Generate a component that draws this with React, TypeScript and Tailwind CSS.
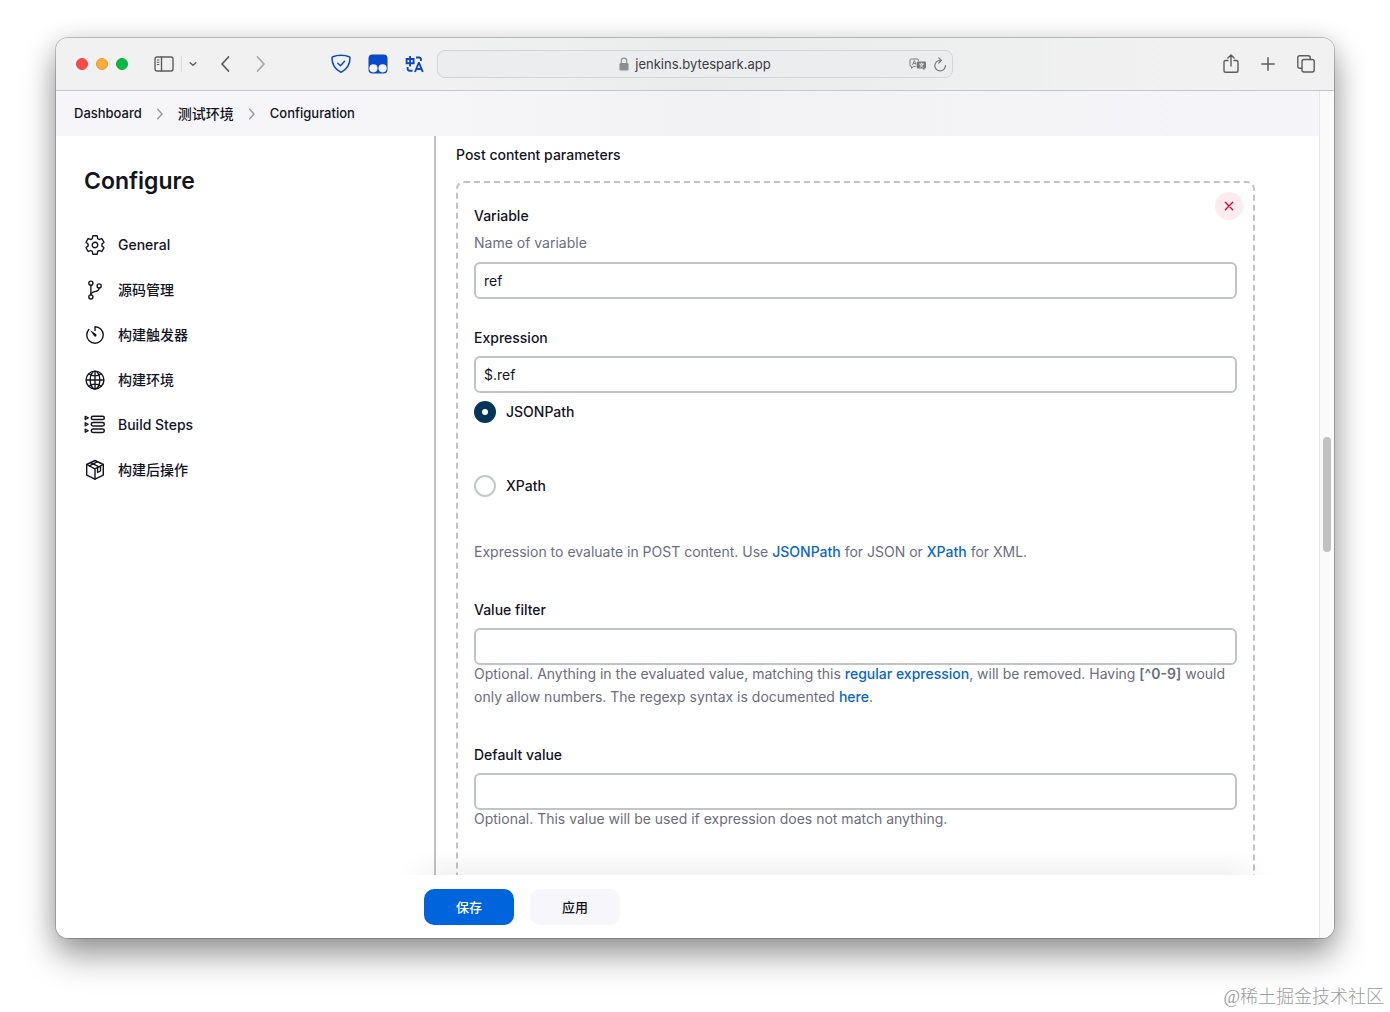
import type { ReactNode } from "react";
import {
  IoGitBranchOutline,
  IoGlobeOutline,
  IoSettingsOutline,
  IoTimerOutline,
} from "react-icons/io5";

const line = {
  fill: "none",
  stroke: "currentColor",
  strokeLinecap: "round" as const,
  strokeLinejoin: "round" as const,
};

function SidebarIcon() {
  return (
    <svg width="20" height="16" viewBox="0 0 20 16" {...line} strokeWidth="1.4">
      <rect x="1" y="1" width="18" height="14" rx="2" />
      <path d="M7.5 1v14" />
      <path d="M3.2 4h1.8M3.2 6.3h1.8M3.2 8.6h1.8" strokeWidth="1" />
    </svg>
  );
}

function Chevron({ size, dir, width = 1.6 }: { size: number; dir: "left" | "right" | "down"; width?: number }) {
  const paths = {
    left: "M11.5 2 5 9l6.500 7",
    right: "M5.500 2 12 9l-6.500 7",
    down: "M2.500 6 9 12l6.500-6",
  };
  return (
    <svg width={size} height={size} viewBox="0 0 18 18" {...line} strokeWidth={width}>
      <path d={paths[dir]} />
    </svg>
  );
}

function ShieldIcon() {
  return (
    <svg width="20" height="20" viewBox="0 0 20 20" {...line} strokeWidth="1.5">
      <path d="M10 1.200c3 0 6 .6 8.300 1.500.6.2.7.6.7 1.200 0 6.500-3.200 11.300-9 14.400C4.200 15.200 1 10.400 1 3.900c0-.6.1-1 .7-1.200C4 1.800 7 1.200 10 1.200Z" />
      <path d="m6.800 9.200 2.600 2.600 4.200-4.600" />
    </svg>
  );
}

function MonkeyIcon() {
  return (
    <svg width="20" height="20" viewBox="0 0 20 20">
      <rect x="0.500" y="0.500" width="19" height="19" rx="4" fill="#0a49c9" />
      <circle cx="5.400" cy="14.300" r="4.100" fill="#f1f2f2" />
      <circle cx="14.600" cy="14.300" r="4.100" fill="#f1f2f2" />
    </svg>
  );
}

function TranslateIcon() {
  return (
    <svg width="19" height="18" viewBox="0 0 19 18" {...line} strokeLinecap="butt" strokeLinejoin="miter" strokeWidth="1.900">
      <path d="M1.600 4h7v4.200h-7ZM5.100 1v10.500" />
      <path d="M11 2.500h3c1.300 0 1.900.6 1.900 1.900V6" />
      <path d="M2.600 12v1.600c0 1.400.8 2.200 2.200 2.200H7.500" />
      <path d="m10 17 3.700-9h.4l3.700 9M11.300 14h5.200" />
    </svg>
  );
}

function LockIcon() {
  return (
    <svg width="10" height="14" viewBox="0 0 10 14">
      <rect x="0.500" y="6" width="9" height="7.500" rx="1.200" fill="#8f8f91" />
      <path d="M2.300 6V3.800a2.700 2.700 0 0 1 5.400 0V6" fill="none" stroke="#8f8f91" strokeWidth="1.200" />
    </svg>
  );
}

function PageTranslateIcon() {
  return (
    <svg width="18" height="13" viewBox="0 0 18 13" fill="none">
      <path d="M9.500 3V2.200C9.500 1.400 9 1 8.300 1H2.200C1.400 1 1 1.400 1 2.200v5c0 .8.400 1.200 1.200 1.200h.4v2l2.200-2H6.800" stroke="#77787a" />
      <path d="m3.500 7 1.800-4.500L7 6.500M4.200 5.500h2.300" stroke="#77787a" strokeWidth="0.900" />
      <path d="M9.200 3.500h6.300c1 0 1.500.5 1.500 1.500v4.200c0 .9-.5 1.400-1.500 1.400v1.700l-2-1.700H9.200c-1 0-1.500-.5-1.500-1.400V5c0-1 .5-1.500 1.500-1.500Z" fill="#77787a" />
      <path d="M10 6h5M12.500 4.700V6M10.700 9.300c1.600-.6 2.700-1.700 3.200-3.300M11.200 6c.5 1.600 1.500 2.700 3.100 3.300" stroke="#ebeced" strokeWidth="0.900" />
    </svg>
  );
}

function ReloadIcon() {
  return (
    <svg width="14" height="15" viewBox="0 0 14 15" {...line} strokeWidth="1.200">
      <path d="M7.200 3.300a5.300 5.300 0 1 0 5.200 5.200" />
      <path d="M5.800.8 8.400 3.400 5.800 6" />
    </svg>
  );
}

function ShareIcon() {
  return (
    <svg width="16" height="20" viewBox="0 0 16 20" {...line} strokeWidth="1.400">
      <path d="M5 6.500H2.800C1.600 6.500 1 7.100 1 8.300v8.200c0 1.200.6 1.800 1.800 1.800h10.400c1.200 0 1.800-.6 1.800-1.800V8.300c0-1.200-.6-1.800-1.800-1.800H11" />
      <path d="M8 12V1.200M4.900 4.100 8 1l3.100 3.100" />
    </svg>
  );
}

function PlusIcon() {
  return (
    <svg width="14" height="14" viewBox="0 0 14 14" {...line} strokeWidth="1.500">
      <path d="M7 .8v12.400M.8 7h12.400" />
    </svg>
  );
}

function TabsIcon() {
  return (
    <svg width="18" height="18" viewBox="0 0 18 18" {...line} strokeWidth="1.400">
      <rect x="5" y="4.500" width="12.200" height="12.500" rx="2" />
      <path d="M5 13.200H2.800c-1.300 0-2-.7-2-2V2.800c0-1.300.7-2 2-2h8.400c1.300 0 2 .7 2 2v1.700" />
    </svg>
  );
}

function StepsIcon() {
  return (
    <svg width="22" height="22" viewBox="0 0 22 22" {...line} strokeWidth="1.500">
      {[3.9, 10.3, 16.7].map((y) => (
        <g key={y}>
          <rect x="7.300" y={y - 1.700} width="13" height="3.400" rx="1.700" />
          <path d={`M1.200 ${y - 1.6} 4.200 ${y} 1.200 ${y + 1.6}Z`} strokeWidth="1.300" />
        </g>
      ))}
    </svg>
  );
}

function PackageIcon() {
  return (
    <svg width="22" height="22" viewBox="0 0 22 22" {...line} strokeWidth="1.400">
      <path d="m11 1.500 8.300 4v10.600L11 20.200l-8.300-4.100V5.500Z" />
      <path d="m2.700 5.500 8.300 4.300 8.300-4.300M11 9.800v10.400" />
      <path d="m6.700 3.600 8.300 4.200M5.300 6.800l8.300-4.100M13.600 8.600v4.900l2.900-1.500V7.100" />
    </svg>
  );
}

function NavItem({ icon, children }: { icon: ReactNode; children: ReactNode }) {
  return (
    <li>
      <a href="#" className="flex h-[45px] items-center gap-3">
        <span className="flex w-[22px] shrink-0 justify-center">{icon}</span>
        {children}
      </a>
    </li>
  );
}

function TextField({ id, label, value = "", description }: { id: string; label: string; value?: string; description?: string }) {
  return (
    <div>
      <label htmlFor={id} className="block font-medium leading-[22px]">
        {label}
      </label>
      {description && <p className="mt-[5px] mb-2 leading-[22px] text-[#6d6d80]">{description}</p>}
      <input
        id={id}
        type="text"
        defaultValue={value}
        className="mt-[7px] block h-[37px] w-full rounded-md border-2 border-[#c0c4c5] bg-white px-2 outline-none"
      />
    </div>
  );
}

function Radio({ label, checked = false }: { label: string; checked?: boolean }) {
  return (
    <label className="flex h-[22px] w-fit items-center gap-2.5 font-medium">
      <input
        type="radio"
        name="expressionType"
        defaultChecked={checked}
        className="size-[22px] appearance-none rounded-full border-2 border-[#c3c8c9] bg-white checked:border-8 checked:border-[#053657]"
      />
      {label}
    </label>
  );
}

function Help({ children }: { children: ReactNode }) {
  return <p className="-mt-[3px] leading-[23px] text-[#6d6d7a]">{children}</p>;
}

function Link({ children }: { children: ReactNode }) {
  return (
    <a href="#" className="font-medium text-[#0a66c8]">
      {children}
    </a>
  );
}

function Toolbar() {
  return (
    <header className="grid h-[53px] shrink-0 grid-cols-[1fr_minmax(0,516px)_1fr] items-center border-b border-[#c4c6c7] bg-linear-to-r from-[#f1f1f1] from-30% via-[#eaecec] via-50% to-[#f1f1f1] to-90% text-[#5c5c5e]">
      <div className="flex items-center pl-5">
        <div className="flex gap-2">
          <button aria-label="Close window" className="size-3 rounded-full border border-[#e2453f] bg-[#fc4a4c]" />
          <button aria-label="Minimize window" className="size-3 rounded-full border border-[#e19a32] bg-[#fdab3a]" />
          <button aria-label="Zoom window" className="size-3 rounded-full border border-[#0aa83c] bg-[#08b945]" />
        </div>
        <button aria-label="Sidebar" className="ml-[26px]"><SidebarIcon /></button>
        <span className="ml-[7px] h-4 w-px bg-[#dcdcdc]" />
        <button aria-label="Tab groups" className="ml-[7px]"><Chevron size={8} dir="down" width={3} /></button>
        <button aria-label="Back" className="ml-5"><Chevron size={18} dir="left" width={1.8} /></button>
        <button aria-label="Forward" className="ml-[17px] text-[#a9a9aa]"><Chevron size={18} dir="right" width={1.8} /></button>
        <div className="mr-[13px] ml-auto flex items-center gap-[17px] text-[#0a49c0]">
          <button aria-label="Content blocker"><ShieldIcon /></button>
          <button aria-label="User scripts"><MonkeyIcon /></button>
          <button aria-label="Translate"><TranslateIcon /></button>
        </div>
      </div>
      <div className="relative flex h-7 items-center justify-center gap-1.5 rounded-lg border border-[#d2d5d5] bg-[#ebedee] text-[13px] text-[#3c3c3e]">
        <LockIcon />
        <span>jenkins.bytespark.app</span>
        <div className="absolute right-[5px] flex items-center gap-1.5 text-[#77787a]">
          <button aria-label="Translate page"><PageTranslateIcon /></button>
          <button aria-label="Reload"><ReloadIcon /></button>
        </div>
      </div>
      <div className="flex items-center justify-end gap-[22px] pr-[19px]">
        <button aria-label="Share"><ShareIcon /></button>
        <button aria-label="New tab"><PlusIcon /></button>
        <button aria-label="Tab overview"><TabsIcon /></button>
      </div>
    </header>
  );
}

function Breadcrumbs() {
  return (
    <nav aria-label="Breadcrumb" className="flex h-[45px] shrink-0 items-center bg-linear-to-r from-[#f6f6f9] from-30% via-[#f2f2f4] via-50% to-[#f5f5f9] to-95% pl-[18px] text-[13px] font-medium">
      <ol className="flex items-center gap-3">
        <li><a href="#">Dashboard</a></li>
        <li aria-hidden className="text-[#9a9aa2]"><Chevron size={12} dir="right" width={2.2} /></li>
        <li><a href="#" className="text-sm">测试环境</a></li>
        <li aria-hidden className="text-[#9a9aa2]"><Chevron size={12} dir="right" width={2.2} /></li>
        <li><a href="#">Configuration</a></li>
      </ol>
    </nav>
  );
}

export default function App() {
  return (
    <div className="flex h-screen flex-col bg-white px-14 pt-[38px] font-['Inter','Noto_Sans_CJK_SC',sans-serif] text-sm text-[#14141f]">
      <div className="flex min-h-0 flex-1 flex-col overflow-hidden rounded-xl bg-white shadow-[0_0_0_1px_rgba(0,0,0,0.2),0_18px_34px_rgba(0,0,0,0.36),0_4px_26px_rgba(0,0,0,0.16)]">
        <Toolbar />
        <div className="flex min-h-0 flex-1">
          <div className="flex min-w-0 flex-1 flex-col">
            <Breadcrumbs />
            <div className="flex min-h-0 flex-1">
              <aside className="w-[378px] shrink-0 px-7 pt-7">
                <h1 className="text-[23px] leading-[34px] font-semibold">Configure</h1>
                <ul className="mt-6 font-medium">
                  <NavItem icon={<IoSettingsOutline size={22} />}>General</NavItem>
                  <NavItem icon={<IoGitBranchOutline size={22} />}>源码管理</NavItem>
                  <NavItem icon={<IoTimerOutline size={22} />}>构建触发器</NavItem>
                  <NavItem icon={<IoGlobeOutline size={22} />}>构建环境</NavItem>
                  <NavItem icon={<StepsIcon />}>Build Steps</NavItem>
                  <NavItem icon={<PackageIcon />}>构建后操作</NavItem>
                </ul>
              </aside>
              <main className="min-w-0 flex-1 overflow-hidden border-l-2 border-[#c0c4c5] pt-2 pr-16 pl-5">
                <h2 className="leading-[22px] font-medium">Post content parameters</h2>
                <section className="relative mt-[15px] rounded-lg border-2 border-dashed border-[#c0c4c5] px-4 pt-[22px] pb-20">
                  <button aria-label="Remove parameter" className="absolute top-[9px] right-2.5 flex size-7 items-center justify-center rounded-full bg-[#fcecf0] text-[#d6003c]">
                    <svg width="10" height="10" viewBox="0 0 10 10" {...line} strokeWidth="1.300">
                      <path d="m1.300 1.300 7.400 7.400M8.700 1.300 1.300 8.700" />
                    </svg>
                  </button>
                  <TextField id="variable" label="Variable" description="Name of variable" value="ref" />
                  <div className="mt-7">
                    <TextField id="expression" label="Expression" value="$.ref" />
                    <div className="mt-2 mb-[46px] flex flex-col gap-[52px]">
                      <Radio label="JSONPath" checked />
                      <Radio label="XPath" />
                    </div>
                    <Help>
                      Expression to evaluate in POST content. Use <Link>JSONPath</Link> for JSON or <Link>XPath</Link> for XML.
                    </Help>
                  </div>
                  <div className="mt-9">
                    <TextField id="filter" label="Value filter" />
                    <Help>
                      Optional. Anything in the evaluated value, matching this <Link>regular expression</Link>, will be removed. Having{" "}
                      <b className="font-semibold">[^0-9]</b> would only allow numbers. The regexp syntax is documented <Link>here</Link>.
                    </Help>
                  </div>
                  <div className="mt-9">
                    <TextField id="default" label="Default value" />
                    <Help>Optional. This value will be used if expression does not match anything.</Help>
                  </div>
                </section>
              </main>
            </div>
            <div className="relative flex shrink-0 gap-4 bg-white pt-3.5 pb-[13px] pl-[368px] text-[13px] font-medium">
              <div className="pointer-events-none absolute right-12 bottom-full left-[344px] h-6 bg-linear-to-b from-transparent to-black/5 mask-x-from-95%" />
              <button className="h-9 w-[90px] rounded-[10px] bg-[#0064dc] text-white">保存</button>
              <button className="h-9 w-[90px] rounded-[10px] bg-[#f6f6fb]">应用</button>
            </div>
          </div>
          <div className="w-[15px] shrink-0 border-l border-[#e6e6e6] bg-[#fafafa] px-[3px] pt-[346px]">
            <div className="h-[115px] w-2 rounded-full bg-[#c1c1c1]" />
          </div>
        </div>
      </div>
      <footer className="-mr-[50px] flex h-[74px] shrink-0 items-end justify-end pb-px font-['Liberation_Serif','Noto_Sans_CJK_SC',serif] text-lg font-light text-[#9c9c9c]">
        @稀土掘金技术社区
      </footer>
    </div>
  );
}
